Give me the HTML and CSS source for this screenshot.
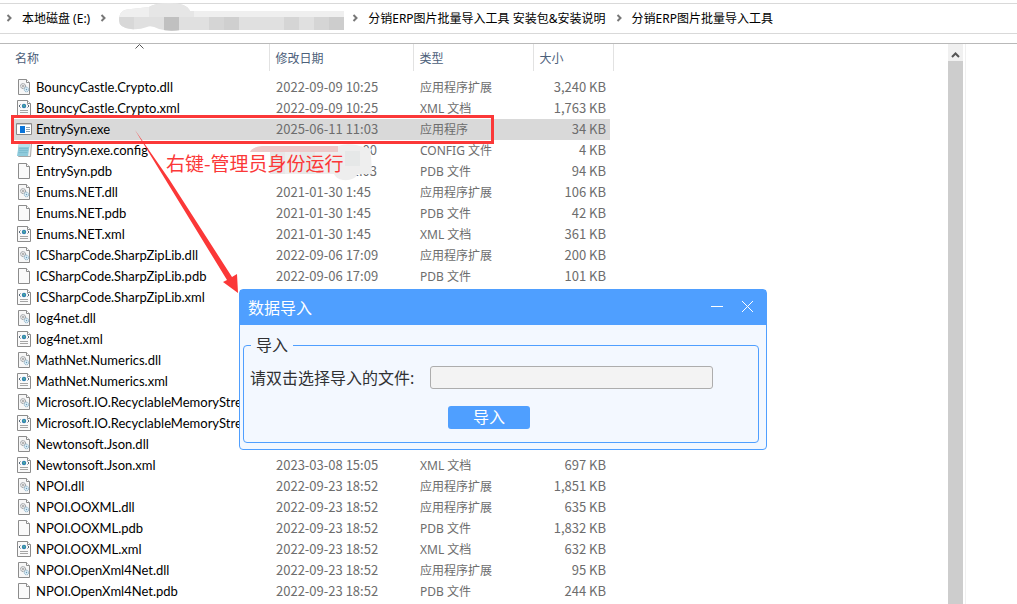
FILE: index.html
```
<!DOCTYPE html>
<html lang="zh-CN">
<head>
  <meta charset="UTF-8">
  <title>分销ERP图片批量导入工具</title>
  <link rel="stylesheet" href="styles.css">
</head>
<body>
  <!-- Icons -->
  <svg class="sprite" width="0" height="0">
    <symbol id="icon-page" viewBox="0 0 16 16">
      <path d="M2.500.5h8l3 3v12h-11z" fill="#fafafa" stroke="#8c8c8c"/>
      <path d="M10.500.5v3h3" fill="#fff" stroke="#8c8c8c"/>
    </symbol>
    <symbol id="icon-dll" viewBox="0 0 16 16">
      <path d="M2.500.5h8l3 3v12h-11z" fill="#f7f7f7" stroke="#8c8c8c"/>
      <path d="M10.500.5v3h3" fill="#fff" stroke="#8c8c8c"/>
      <circle cx="7" cy="7" r="2.500" fill="#e4e4e4" stroke="#858b90" stroke-dasharray="1.200 .6"/>
      <circle cx="7" cy="7" r=".8" fill="#777"/>
      <circle cx="10.500" cy="10.500" r="2.300" fill="#d9ebf5" stroke="#86acc4" stroke-dasharray="1.200 .6"/>
      <circle cx="10.500" cy="10.500" r=".7" fill="#6f9db8"/>
    </symbol>
    <symbol id="icon-xml" viewBox="0 0 16 16">
      <path d="M1.500.5h10l3 3v12h-13z" fill="#fafafa" stroke="#8c8c8c"/>
      <path d="M11.500.5v3h3" fill="#fff" stroke="#8c8c8c"/>
      <path d="M4.500 4.500L3 6l1.500 1.500M11.500 4.500L13 6l-1.500 1.500" fill="none" stroke="#5b6a78"/>
      <circle cx="8" cy="6" r="2.200" fill="#2f7fb5"/>
      <path d="M7 4.500l2 1-1 2z" fill="#5fc08a"/>
      <path d="M4 10.500h8M4 12.500h8" stroke="#a5a5a5"/>
    </symbol>
    <symbol id="icon-exe" viewBox="0 0 16 16">
      <path d="M.5 2.500h15v11H.5z" fill="#fff" stroke="#8a8a8a"/>
      <path d="M1 3.500h14" stroke="#d0d0d0"/>
      <path d="M4 5h5v7H4z" fill="#0a74d9"/>
      <path d="M10 6.500h4M10 8.500h4M10 10.500h4" stroke="#8fa3b5"/>
    </symbol>
    <symbol id="icon-config" viewBox="0 0 16 16">
      <path d="M3.500 .5h12l-1 14h-12z" fill="#f1f1f1" stroke="#a7a7a7"/>
      <path d="M3 1h11l-2 13H1z" fill="#8fcbdc"/>
      <path d="M3 1h11l-.5 4H2.700z" fill="#b9e2ec"/>
      <path d="M3 6.500h9M3 8.500h9M2.500 10.500h9" stroke="#7dbdd0"/>
    </symbol>
  </svg>

  <nav class="address">
    <svg class="chevron" viewBox="0 0 6 8"><path d="M1.500 1l3 3-3 3"/></svg>
    <a href="#">本地磁盘 (E:)</a>
    <svg class="chevron" viewBox="0 0 6 8"><path d="M1.500 1l3 3-3 3"/></svg>
    <svg class="mosaic-path" viewBox="0 0 230 30">
      <clipPath id="path-shape"><path d="M0 17Q0 6 12 6L30 4Q36 0 50 0Q68 0 71 8H225V27H62Q50 29 40 26Q32 22 28 24Q20 27 12 26Q0 25 0 17z"/></clipPath>
      <g clip-path="url(#path-shape)">
        <path d="M0 0h230v30H0z" fill="#e0e0e0"/>
        <path d="M0 0h30v14H0zM75 0h155v14H75z" fill="#efefef"/>
        <path d="M30 0h45v14H30z" fill="#e6e6e6"/>
        <path d="M0 14h15v16H0z" fill="#d8d8d8"/>
        <path d="M45 14h15v16H45z" fill="#c0c0c0"/>
        <path d="M105 14h15v16h-15z" fill="#cfcfcf"/>
        <path d="M90 14h15v16H90zM165 14h15v16h-15zM195 14h15v16h-15z" fill="#d5d5d5"/>
        <path d="M210 14h15v16h-15z" fill="#cdcdcd"/>
      </g>
    </svg>
    <svg class="chevron" viewBox="0 0 6 8"><path d="M1.500 1l3 3-3 3"/></svg>
    <a href="#">分销ERP图片批量导入工具 安装包&amp;安装说明</a>
    <svg class="chevron" viewBox="0 0 6 8"><path d="M1.500 1l3 3-3 3"/></svg>
    <a href="#">分销ERP图片批量导入工具</a>
  </nav>

  <main class="explorer">
    <div class="list">
      <svg class="sort" viewBox="0 0 9 5"><path d="M.5 4.500l4-4 4 4"/></svg>
      <table class="files">
        <colgroup>
          <col class="col-name"><col class="col-date"><col class="col-type"><col class="col-size"><col>
        </colgroup>
        <thead>
          <tr><th>名称</th><th>修改日期</th><th>类型</th><th>大小</th><td></td></tr>
        </thead>
        <tbody id="rows"></tbody>
      </table>
    </div>
    <div class="scrollbar">
      <button class="scroll-up" aria-label="向上滚动"><svg viewBox="0 0 9 6"><path d="M1 5l3.500-3.500L8 5"/></svg></button>
      <div class="thumb"></div>
    </div>
    <aside class="preview"></aside>
  </main>

  <!-- Annotations over the list -->
  <div class="frame"></div>
  <svg class="mosaic-date" viewBox="0 0 124 38">
    <clipPath id="date-shape"><path d="M0 9Q2 4 12 3H88Q96 0 106 2L122 6Q119 10 121 12L122 31H108Q104 38 93 37Q86 36 84 31H20V9z"/></clipPath>
    <g clip-path="url(#date-shape)">
      <path d="M0 0h124v38H0z" fill="#eeeeee"/>
      <path d="M20 8h15v24H20z" fill="#e8e8e8"/>
      <path d="M50 8h15v24H50zM95 8h15v15H95z" fill="#e6e8e8"/>
      <path d="M0 0h88v9H0z" fill="#eccaca"/>
    </g>
  </svg>
  <svg class="arrow" viewBox="0 0 104 164"><path d="M0 0L92 150 88 152 103 163 102 144 97 147 34 49z"/></svg>
  <div class="note">右键-管理员身份运行</div>

  <section class="dialog">
    <header>
      <h1>数据导入</h1>
      <button aria-label="最小化"><svg viewBox="0 0 13 13"><path d="M0 6.500h12"/></svg></button>
      <button aria-label="关闭"><svg viewBox="0 0 13 13"><path d="M1 1l11 11M12 1L1 12"/></svg></button>
    </header>
    <fieldset>
      <legend>导入</legend>
      <div class="field">
        <label for="file">请双击选择导入的文件:</label>
        <input id="file" type="text" readonly>
      </div>
      <button class="import">导入</button>
    </fieldset>
  </section>

  <script>
    const types = { dll: '应用程序扩展', xml: 'XML 文档', pdb: 'PDB 文件', exe: '应用程序', config: 'CONFIG 文件' };
    const icons = { dll: 'dll', xml: 'xml', pdb: 'page', exe: 'exe', config: 'config' };
    const files = [
      ['BouncyCastle.Crypto.dll', '2022-09-09 10:25', '3,240 KB'],
      ['BouncyCastle.Crypto.xml', '2022-09-09 10:25', '1,763 KB'],
      ['EntrySyn.exe', '2025-06-11 11:03', '34 KB'],
      ['EntrySyn.exe.config', '00', '4 KB'],
      ['EntrySyn.pdb', '1:03', '94 KB'],
      ['Enums.NET.dll', '2021-01-30 1:45', '106 KB'],
      ['Enums.NET.pdb', '2021-01-30 1:45', '42 KB'],
      ['Enums.NET.xml', '2021-01-30 1:45', '361 KB'],
      ['ICSharpCode.SharpZipLib.dll', '2022-09-06 17:09', '200 KB'],
      ['ICSharpCode.SharpZipLib.pdb', '2022-09-06 17:09', '101 KB'],
      ['ICSharpCode.SharpZipLib.xml', '', ''],
      ['log4net.dll', '', ''],
      ['log4net.xml', '', ''],
      ['MathNet.Numerics.dll', '', ''],
      ['MathNet.Numerics.xml', '', ''],
      ['Microsoft.IO.RecyclableMemoryStream.dll', '', ''],
      ['Microsoft.IO.RecyclableMemoryStream.xml', '', ''],
      ['Newtonsoft.Json.dll', '', ''],
      ['Newtonsoft.Json.xml', '2023-03-08 15:05', '697 KB'],
      ['NPOI.dll', '2022-09-23 18:52', '1,851 KB'],
      ['NPOI.OOXML.dll', '2022-09-23 18:52', '635 KB'],
      ['NPOI.OOXML.pdb', '2022-09-23 18:52', '1,832 KB'],
      ['NPOI.OOXML.xml', '2022-09-23 18:52', '632 KB'],
      ['NPOI.OpenXml4Net.dll', '2022-09-23 18:52', '95 KB'],
      ['NPOI.OpenXml4Net.pdb', '2022-09-23 18:52', '244 KB']
    ];

    document.getElementById('rows').innerHTML = files.map(([name, date, size]) => {
      const ext = name.split('.').pop();
      // dates under the mosaic keep only their last digits
      const masked = date && date.length < 6 ? 'masked' : '';
      return `<tr class="${ext === 'exe' ? 'selected' : ''}">
        <td class="name"><svg class="icon"><use href="#icon-${icons[ext]}"/></svg>${name}</td>
        <td class="date ${masked}">${date}</td>
        <td>${date ? types[ext] : ''}</td>
        <td class="size">${size}</td>
      </tr>`;
    }).join('');
  </script>
</body>
</html>
```

FILE: styles.css
```
* {
  box-sizing: border-box;
}
body {
  margin: 0;
  height: 100vh;
  display: flex;
  flex-direction: column;
  overflow: hidden;
  background: #fff;
  font-family: "Noto Sans", "Noto Sans CJK SC", sans-serif;
  font-size: 12px;
  color: #000;
}
button {
  border: none;
  padding: 0;
  font-family: inherit;
}
.sprite {
  position: absolute;
}

/* address bar */
.address {
  display: flex;
  align-items: center;
  height: 31px;
  margin-top: 3px;
  padding: 0 0 2px 6px;
  border-top: 1px solid #d9d9d9;
  border-bottom: 1px solid #d9d9d9;
  white-space: nowrap;
}
.address a {
  margin: 0 10px;
  color: #000;
  text-decoration: none;
}
.chevron {
  flex: none;
  width: 6px;
  height: 8px;
  fill: none;
  stroke: #777;
  stroke-width: 2;
}
.mosaic-path {
  flex: none;
  width: 230px;
  height: 30px;
  margin: 0 3px 0 13px;
}

/* file list */
.explorer {
  flex: 1;
  min-height: 0;
  display: flex;
  margin-top: 9px;
  border-top: 1px solid #b9b9b9;
}
.list {
  position: relative;
  flex: 1;
  padding-left: 12px;
  overflow: hidden;
}
.sort {
  position: absolute;
  left: 135px;
  top: 0;
  width: 9px;
  height: 5px;
  fill: none;
  stroke: #555;
}
.files {
  width: 100%;
  table-layout: fixed;
  border-collapse: collapse;
}
.col-name {
  width: 257px;
}
.col-date {
  width: 144px;
}
.col-type {
  width: 120px;
}
.col-size {
  width: 80px;
}
.files th {
  height: 27px;
  padding: 0 6px;
  border-right: 1px solid #e2e2e2;
  text-align: left;
  font-weight: normal;
  color: #4c607a;
}
.files th:first-child {
  padding-left: 3px;
}
.files tbody::before {
  content: "";
  display: block;
  height: 6px;
}
.files tbody td {
  height: 21px;
  padding: 0 7px;
  line-height: 18px;
  white-space: nowrap;
  color: #6d6d6d;
}
.files tbody .name,
.files tbody .date,
.files tbody .size {
  padding-bottom: 2px;
  font-family: "Noto Sans CJK SC", sans-serif;
  font-size: 13px;
}
.files tbody .name {
  padding-left: 4px;
  font-family: Lato, sans-serif;
  color: #000;
}
.files tbody .masked {
  padding-right: 36px;
  text-align: right;
}
.files tbody .size {
  text-align: right;
}
.files .selected td {
  background: #d9d9d9;
}
.files .selected .size {
  background: linear-gradient(to left, transparent 3px, #d9d9d9 3px);
}
.icon {
  width: 16px;
  height: 16px;
  margin: -2px 4px 0 0;
  vertical-align: middle;
}
.scrollbar {
  width: 15px;
  display: flex;
  flex-direction: column;
}
.scroll-up {
  height: 17px;
  background: #f0f0f0;
}
.scroll-up svg {
  width: 9px;
  height: 6px;
  fill: none;
  stroke: #555;
  stroke-width: 2;
}
.thumb {
  flex: 1;
  background: #cdcdcd;
}
.preview {
  width: 52px;
  margin-left: 2px;
  border-left: 1px solid #f0f0f0;
}

/* annotations */
.frame {
  position: absolute;
  left: 11px;
  top: 115px;
  width: 483px;
  height: 29px;
  border: 3px solid #fb3838;
}
.mosaic-date {
  position: absolute;
  left: 250px;
  top: 143px;
  width: 124px;
  height: 38px;
}
.arrow {
  position: absolute;
  left: 135px;
  top: 130px;
  width: 104px;
  height: 164px;
  fill: #fb3838;
}
.note {
  position: absolute;
  left: 166px;
  top: 149px;
  font-family: "Noto Sans CJK SC", sans-serif;
  font-size: 19px;
  line-height: 28px;
  color: #fb3838;
}

/* dialog */
.dialog {
  position: absolute;
  left: 239px;
  top: 289px;
  width: 528px;
  padding-bottom: 6px;
  border: 1px solid #4f9fff;
  border-radius: 4px;
  background: #f3f8ff;
  font-size: 16px;
  color: #303133;
}
.dialog header {
  display: flex;
  align-items: center;
  gap: 17px;
  height: 35px;
  padding: 0 12px 2px 8px;
  background: #4f9fff;
  color: #fff;
}
.dialog h1 {
  flex: 1;
  margin: 0;
  font-size: 16px;
  font-weight: normal;
}
.dialog header button {
  display: flex;
  background: none;
}
.dialog header svg {
  width: 13px;
  height: 13px;
  stroke: #fff;
}
.dialog fieldset {
  margin: 8px 7px 0 3px;
  padding: 8px 6px 13px;
  border: 1px solid #4f9fff;
  border-radius: 4px;
}
.dialog legend {
  margin-left: 1px;
  padding: 0 5px;
  line-height: 24px;
}
.field {
  display: flex;
  align-items: center;
  gap: 16px;
}
.field input {
  width: 283px;
  height: 23px;
  border: 1px solid #adadad;
  border-radius: 3px;
  background: #f3f3f3;
}
.import {
  display: block;
  width: 82px;
  height: 23px;
  margin: 17px 0 0 198px;
  border-radius: 3px;
  background: #4f9fff;
  font-size: 16px;
  line-height: 23px;
  color: #fff;
}
```
